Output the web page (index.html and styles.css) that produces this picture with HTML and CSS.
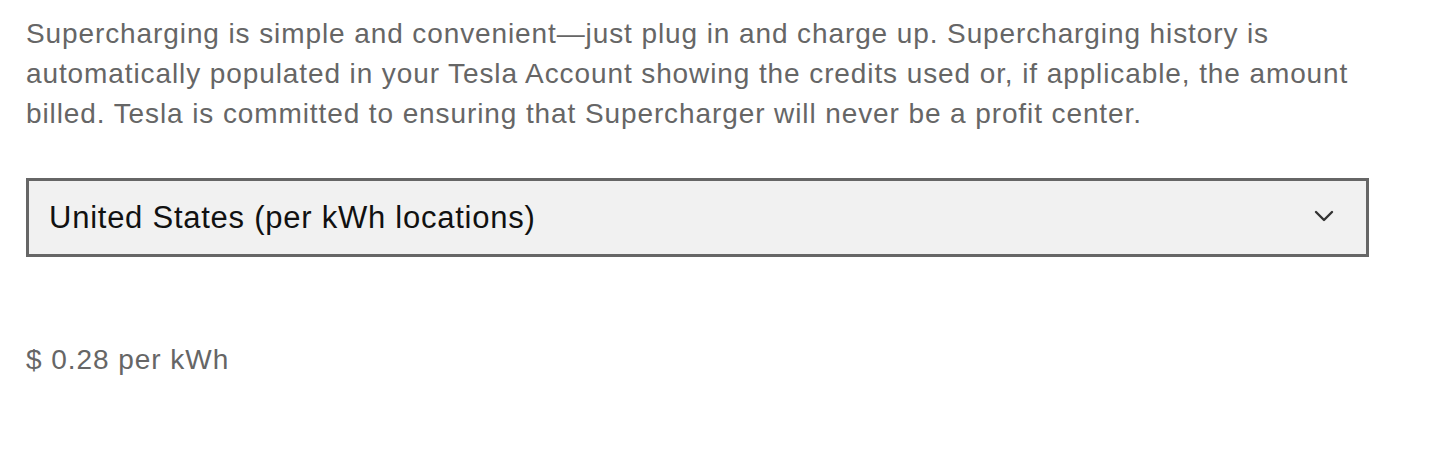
FILE: index.html
```html
<!DOCTYPE html>
<html lang="en">
<head>
  <meta charset="UTF-8">
  <meta name="viewport" content="width=device-width, initial-scale=1.0">
  <title>Supercharging</title>
  <link rel="stylesheet" href="styles.css">
</head>
<body>
  <div class="content">
    <p class="intro">Supercharging is simple and convenient—just plug in and charge up. Supercharging history is automatically populated in your Tesla Account showing the credits used or, if applicable, the amount billed. Tesla is committed to ensuring that Supercharger will never be a profit center.</p>

    <div class="select-box">
      <span class="select-value">United States (per kWh locations)</span>
      <svg class="chevron" width="20" height="12" viewBox="0 0 20 12">
        <path d="M2 2 L10 10 L18 2" fill="none" stroke="#333" stroke-width="2.4" stroke-linecap="round" stroke-linejoin="round"/>
      </svg>
    </div>

    <p class="price">$ 0.28 per kWh</p>
  </div>
</body>
</html>
```

FILE: styles.css
```css
body {
  font-family: "Liberation Sans", Arial, sans-serif;
  margin: 0;
  padding: 0;
  background-color: white;
}
.content {
  padding: 14px 26px 0 26px;
  width: 1343px;
}
.intro {
  margin: 0;
  font-size: 28px;
  line-height: 40px;
  letter-spacing: 0.9px;
  color: #666;
}
.select-box {
  display: flex;
  align-items: center;
  justify-content: space-between;
  box-sizing: border-box;
  height: 79px;
  margin-top: 44px;
  padding: 0 32px 0 20px;
  background-color: #f1f1f1;
  border: 3px solid #666;
}
.chevron {
  margin-top: -3px;
}
.select-value {
  font-size: 31px;
  letter-spacing: 0.75px;
  color: #111;
}
.price {
  margin: 87px 0 0 0;
  font-size: 28px;
  letter-spacing: 0.95px;
  color: #666;
}
```
